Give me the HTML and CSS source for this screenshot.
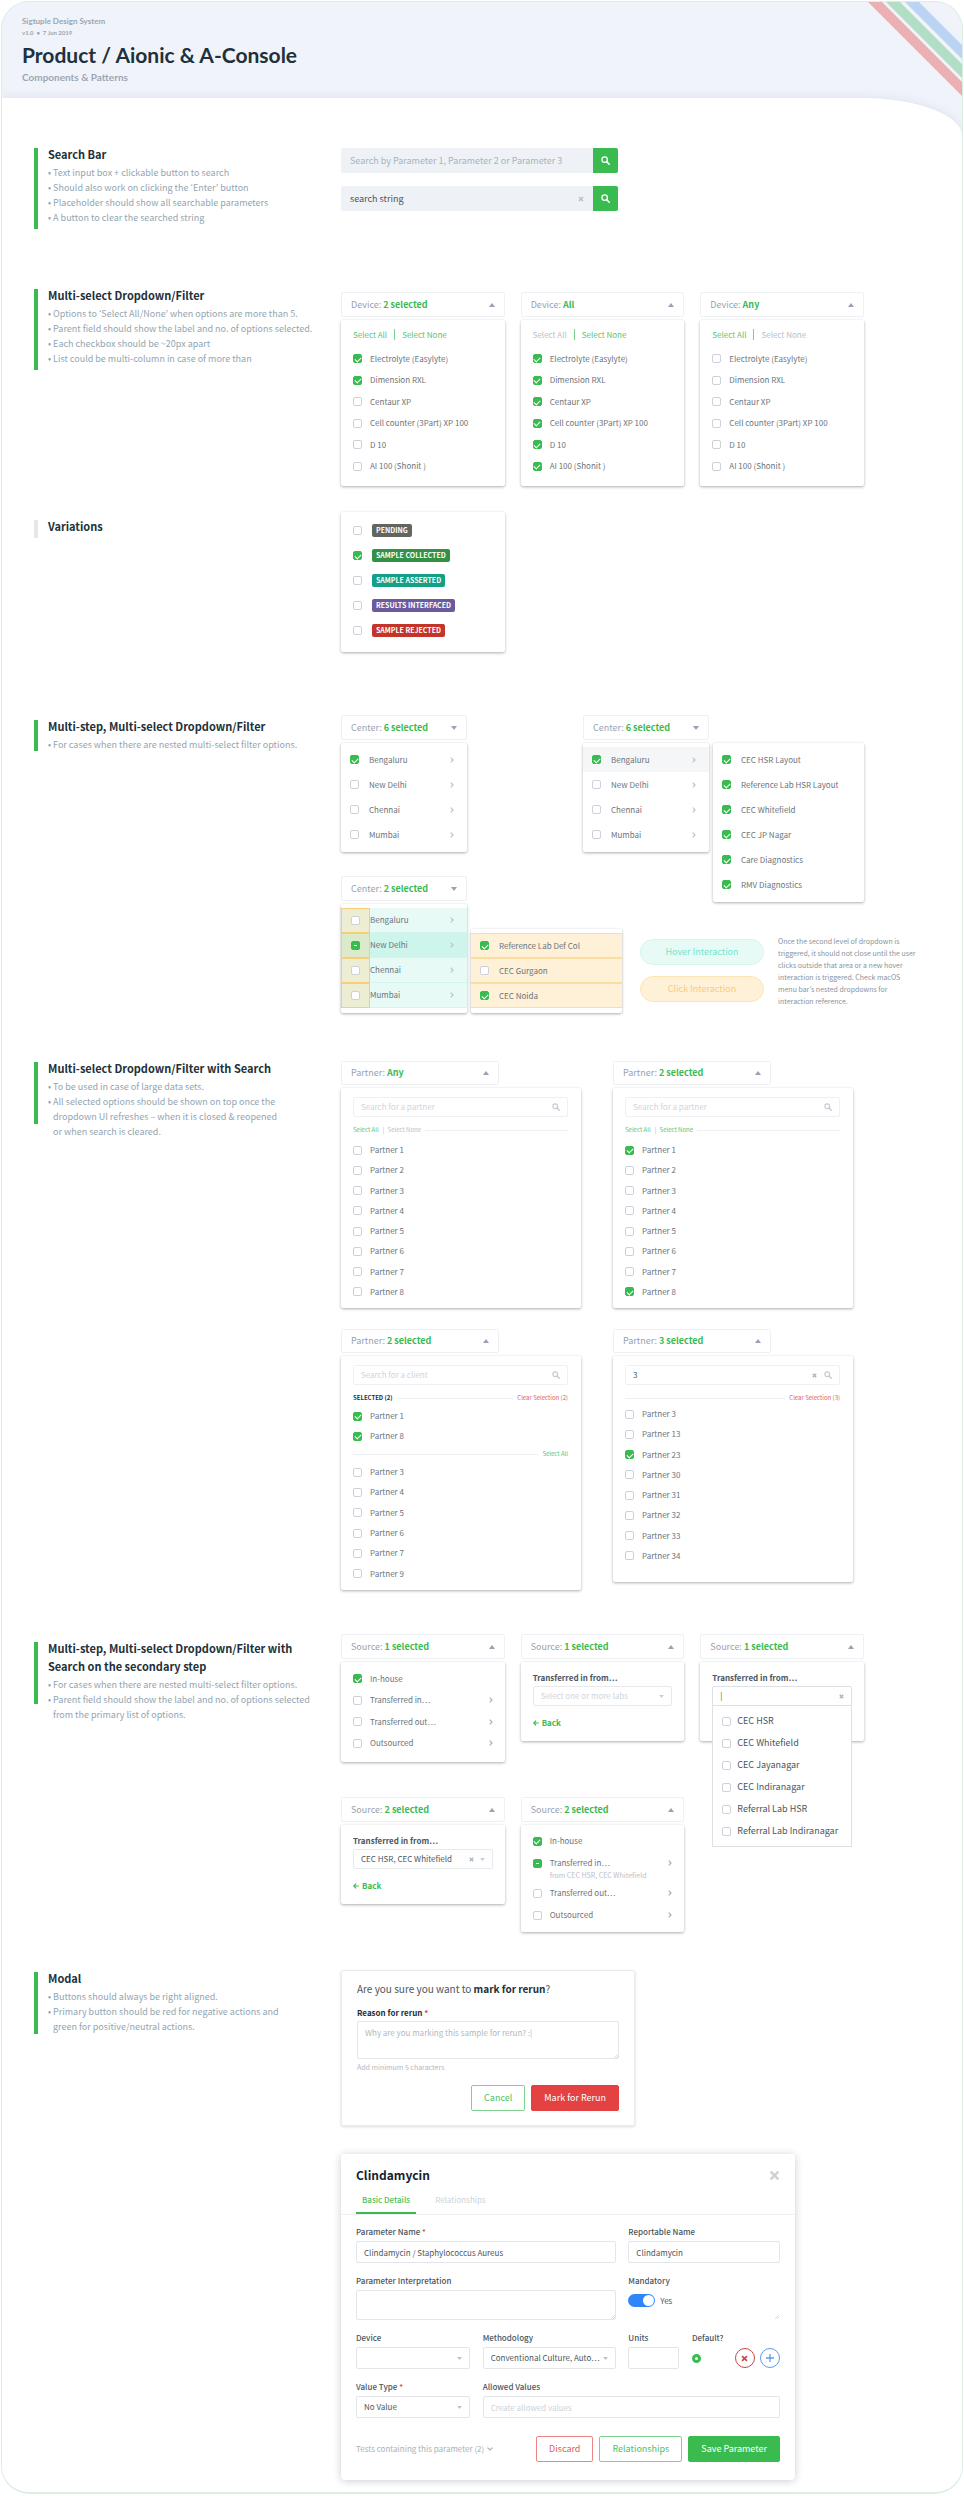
FILE: index.html
```
<!DOCTYPE html>
<html lang="en">
<head>
<meta charset="utf-8">
<title>Product / Aionic &amp; A-Console</title>
<meta name="viewport" content="width=device-width, initial-scale=1">
<link rel="stylesheet" href="styles.css">
</head>
<body>
<svg class="sprite" aria-hidden="true">
  <symbol id="i-search" viewBox="0 0 16 16"><circle cx="6.5" cy="6.5" r="4.8" fill="none" stroke="currentColor" stroke-width="2.2"/><path d="M10 10l4.6 4.6" stroke="currentColor" stroke-width="2.8" stroke-linecap="round"/></symbol>
  <symbol id="i-x" viewBox="0 0 10 10"><path d="M1.5 1.5l7 7M8.5 1.5l-7 7" stroke="currentColor" stroke-width="2.4" fill="none"/></symbol>
  <symbol id="i-up" viewBox="0 0 6 4"><path d="M0 4L3 0l3 4z" fill="currentColor"/></symbol>
  <symbol id="i-down" viewBox="0 0 6 4"><path d="M0 0h6L3 4z" fill="currentColor"/></symbol>
  <symbol id="i-right" viewBox="0 0 4 6"><path d="M.7.7L3 3 .7 5.3" stroke="currentColor" stroke-width="1.2" fill="none"/></symbol>
  <symbol id="i-back" viewBox="0 0 10 10"><path d="M9.5 5H1.5M5 1L1.2 5 5 9" stroke="currentColor" stroke-width="2" fill="none"/></symbol>
  <symbol id="i-grip" viewBox="0 0 6 6"><path d="M0 6L6 0M3 6l3-3" stroke="currentColor" stroke-width=".8"/></symbol>
</svg>
<div class="page">
  <header class="hero">
    <p class="hero-system">Sigtuple Design System</p>
    <p class="hero-version">v1.0 &nbsp;•&nbsp; 7 Jun 2019</p>
    <h1>Product / Aionic &amp; A-Console</h1>
    <p class="hero-sub">Components &amp; Patterns</p>
    <svg class="ribbons" viewBox="0 0 94 94" aria-hidden="true">
      <path d="M0 0h14l80 80v14z" fill="#ebb0b3"/><path d="M18 0h14l62 62v14z" fill="#b2dfc3"/><path d="M37 0h14l43 43v14z" fill="#bcd4f4"/>
    </svg>
  </header>
  <main class="sheet">

    <section class="spec">
      <div class="note"><span class="bar bar-xl"></span><div>
        <h2>Search Bar</h2>
        <ul><li>• Text input box + clickable button to search</li><li>• Should also work on clicking the ‘Enter’ button</li><li>• Placeholder should show all searchable parameters</li><li>• A button to clear the searched string</li></ul>
      </div></div>
      <div class="demo demo-search">
        <form class="searchbar"><input type="text" aria-label="Search parameters" placeholder="Search by Parameter 1, Parameter 2 or Parameter 3"><button type="button" class="go" aria-label="Search"><svg><use href="#i-search"/></svg></button></form>
        <form class="searchbar"><input type="text" aria-label="Search text" value="search string"><button type="button" class="clear" aria-label="Clear"><svg><use href="#i-x"/></svg></button><button type="button" class="go" aria-label="Search"><svg><use href="#i-search"/></svg></button></form>
      </div>
    </section>

    <section class="spec spec-multi">
      <div class="note"><span class="bar bar-xl"></span><div>
        <h2>Multi-select Dropdown/Filter</h2>
        <ul><li>• Options to ‘Select All/None’ when options are more than 5.</li><li>• Parent field should show the label and no. of options selected.</li><li>• Each checkbox should be ~20px apart</li><li>• List could be multi-column in case of more than</li></ul>
      </div></div>
      <div class="demo cols3">
        <div class="dropdown">
          <button class="trigger"><span>Device: <b>2 selected</b></span><svg><use href="#i-up"/></svg></button>
          <div class="menu menu-device">
            <div class="bulk"><button>Select All</button><i></i><button>Select None</button></div>
            <ul class="options">
              <li><label><input type="checkbox" checked>Electrolyte (Easylyte)</label></li>
              <li><label><input type="checkbox" checked>Dimension RXL</label></li>
              <li><label><input type="checkbox">Centaur XP</label></li>
              <li><label><input type="checkbox">Cell counter (3Part) XP 100</label></li>
              <li><label><input type="checkbox">D 10</label></li>
              <li><label><input type="checkbox">AI 100 (Shonit )</label></li>
            </ul>
          </div>
        </div>
        <div class="dropdown">
          <button class="trigger"><span>Device: <b>All</b></span><svg><use href="#i-up"/></svg></button>
          <div class="menu menu-device">
            <div class="bulk"><button disabled>Select All</button><i></i><button>Select None</button></div>
            <ul class="options">
              <li><label><input type="checkbox" checked>Electrolyte (Easylyte)</label></li>
              <li><label><input type="checkbox" checked>Dimension RXL</label></li>
              <li><label><input type="checkbox" checked>Centaur XP</label></li>
              <li><label><input type="checkbox" checked>Cell counter (3Part) XP 100</label></li>
              <li><label><input type="checkbox" checked>D 10</label></li>
              <li><label><input type="checkbox" checked>AI 100 (Shonit )</label></li>
            </ul>
          </div>
        </div>
        <div class="dropdown">
          <button class="trigger"><span>Device: <b>Any</b></span><svg><use href="#i-up"/></svg></button>
          <div class="menu menu-device">
            <div class="bulk"><button>Select All</button><i></i><button disabled>Select None</button></div>
            <ul class="options">
              <li><label><input type="checkbox">Electrolyte (Easylyte)</label></li>
              <li><label><input type="checkbox">Dimension RXL</label></li>
              <li><label><input type="checkbox">Centaur XP</label></li>
              <li><label><input type="checkbox">Cell counter (3Part) XP 100</label></li>
              <li><label><input type="checkbox">D 10</label></li>
              <li><label><input type="checkbox">AI 100 (Shonit )</label></li>
            </ul>
          </div>
        </div>
      </div>
    </section>

    <section class="spec spec-variations">
      <div class="note"><span class="bar bar-sm"></span><div><h2>Variations</h2></div></div>
      <div class="demo cols3">
        <div class="menu menu-status">
          <ul class="options">
            <li><label><input type="checkbox"><span class="tag tag-gray">PENDING</span></label></li>
            <li><label><input type="checkbox" checked><span class="tag tag-green">SAMPLE COLLECTED</span></label></li>
            <li><label><input type="checkbox"><span class="tag tag-teal">SAMPLE ASSERTED</span></label></li>
            <li><label><input type="checkbox"><span class="tag tag-purple">RESULTS INTERFACED</span></label></li>
            <li><label><input type="checkbox"><span class="tag tag-red">SAMPLE REJECTED</span></label></li>
          </ul>
        </div>
      </div>
    </section>

    <section class="spec spec-nested">
      <div class="note"><span class="bar bar-md"></span><div>
        <h2>Multi-step, Multi-select Dropdown/Filter</h2>
        <ul><li>• For cases when there are nested multi-select filter options.</li></ul>
      </div></div>
      <div class="demo nested">
        <div class="nested-top">
          <div class="dropdown center">
            <button class="trigger"><span>Center: <b>6 selected</b></span><svg><use href="#i-down"/></svg></button>
            <div class="menu menu-center"><ul class="options">
              <li><label><input type="checkbox" checked>Bengaluru</label><svg><use href="#i-right"/></svg></li>
              <li><label><input type="checkbox">New Delhi</label><svg><use href="#i-right"/></svg></li>
              <li><label><input type="checkbox">Chennai</label><svg><use href="#i-right"/></svg></li>
              <li><label><input type="checkbox">Mumbai</label><svg><use href="#i-right"/></svg></li>
            </ul></div>
          </div>
          <div class="flyout">
            <div class="dropdown center">
              <button class="trigger"><span>Center: <b>6 selected</b></span><svg><use href="#i-down"/></svg></button>
              <div class="menu menu-center"><ul class="options">
                <li class="hovered"><label><input type="checkbox" checked>Bengaluru</label><svg><use href="#i-right"/></svg></li>
                <li><label><input type="checkbox">New Delhi</label><svg><use href="#i-right"/></svg></li>
                <li><label><input type="checkbox">Chennai</label><svg><use href="#i-right"/></svg></li>
                <li><label><input type="checkbox">Mumbai</label><svg><use href="#i-right"/></svg></li>
              </ul></div>
            </div>
            <div class="menu menu-center submenu"><ul class="options">
              <li><label><input type="checkbox" checked>CEC HSR Layout</label></li>
              <li><label><input type="checkbox" checked>Reference Lab HSR Layout</label></li>
              <li><label><input type="checkbox" checked>CEC Whitefield</label></li>
              <li><label><input type="checkbox" checked>CEC JP Nagar</label></li>
              <li><label><input type="checkbox" checked>Care Diagnostics</label></li>
              <li><label><input type="checkbox" checked>RMV Diagnostics</label></li>
            </ul></div>
          </div>
        </div>
        <div class="nested-bottom">
          <div class="dropdown center">
            <button class="trigger"><span>Center: <b>2 selected</b></span><svg><use href="#i-down"/></svg></button>
            <div class="menu menu-center zones"><ul class="options">
              <li><label><span class="hit"><input type="checkbox"></span>Bengaluru</label><svg><use href="#i-right"/></svg></li>
              <li class="active"><label><span class="hit"><input type="checkbox" class="mixed"></span>New Delhi</label><svg><use href="#i-right"/></svg></li>
              <li><label><span class="hit"><input type="checkbox"></span>Chennai</label><svg><use href="#i-right"/></svg></li>
              <li><label><span class="hit"><input type="checkbox"></span>Mumbai</label><svg><use href="#i-right"/></svg></li>
            </ul></div>
          </div>
          <div class="menu menu-center submenu click"><ul class="options">
            <li><label><input type="checkbox" checked>Reference Lab Def Col</label></li>
            <li><label><input type="checkbox">CEC Gurgaon</label></li>
            <li><label><input type="checkbox" checked>CEC Noida</label></li>
          </ul></div>
          <div class="legend"><span class="pill pill-hover">Hover Interaction</span><span class="pill pill-click">Click Interaction</span></div>
          <p class="remark">Once the second level of dropdown is<br>triggered, it should not close until the user<br>clicks outside that area or a new hover<br>interaction is triggered. Check macOS<br>menu bar’s nested dropdowns for<br>interaction reference.</p>
        </div>
      </div>
    </section>

    <section class="spec spec-search">
      <div class="note"><span class="bar bar-lg"></span><div>
        <h2>Multi-select Dropdown/Filter with Search</h2>
        <ul><li>• To be used in case of large data sets.</li><li>• All selected options should be shown on top once the<br>dropdown UI refreshes – when it is closed &amp; reopened<br>or when search is cleared.</li></ul>
      </div></div>
      <div class="demo cols2">
        <div class="dropdown partner">
          <button class="trigger"><span>Partner: <b>Any</b></span><svg><use href="#i-up"/></svg></button>
          <div class="menu menu-partner">
            <div class="find"><input type="text" aria-label="Search for a partner" placeholder="Search for a partner"><svg><use href="#i-search"/></svg></div>
            <div class="rule"><button>Select All</button><i></i><button disabled>Select None</button><hr></div>
            <ul class="options">
              <li><label><input type="checkbox">Partner 1</label></li><li><label><input type="checkbox">Partner 2</label></li><li><label><input type="checkbox">Partner 3</label></li><li><label><input type="checkbox">Partner 4</label></li><li><label><input type="checkbox">Partner 5</label></li><li><label><input type="checkbox">Partner 6</label></li><li><label><input type="checkbox">Partner 7</label></li><li><label><input type="checkbox">Partner 8</label></li>
            </ul>
          </div>
        </div>
        <div class="dropdown partner">
          <button class="trigger"><span>Partner: <b>2 selected</b></span><svg><use href="#i-up"/></svg></button>
          <div class="menu menu-partner">
            <div class="find"><input type="text" aria-label="Search for a partner" placeholder="Search for a partner"><svg><use href="#i-search"/></svg></div>
            <div class="rule"><button>Select All</button><i></i><button>Select None</button><hr></div>
            <ul class="options">
              <li><label><input type="checkbox" checked>Partner 1</label></li><li><label><input type="checkbox">Partner 2</label></li><li><label><input type="checkbox">Partner 3</label></li><li><label><input type="checkbox">Partner 4</label></li><li><label><input type="checkbox">Partner 5</label></li><li><label><input type="checkbox">Partner 6</label></li><li><label><input type="checkbox">Partner 7</label></li><li><label><input type="checkbox" checked>Partner 8</label></li>
            </ul>
          </div>
        </div>
        <div class="dropdown partner">
          <button class="trigger"><span>Partner: <b>2 selected</b></span><svg><use href="#i-up"/></svg></button>
          <div class="menu menu-partner grouped">
            <div class="find"><input type="text" aria-label="Search for a client" placeholder="Search for a client"><svg><use href="#i-search"/></svg></div>
            <div class="rule"><strong>SELECTED (2)</strong><hr><button class="danger">Clear Selection (2)</button></div>
            <ul class="options picked">
              <li><label><input type="checkbox" checked>Partner 1</label></li><li><label><input type="checkbox" checked>Partner 8</label></li>
            </ul>
            <div class="rule rule-tight"><hr><button>Select All</button></div>
            <ul class="options rest">
              <li><label><input type="checkbox">Partner 3</label></li><li><label><input type="checkbox">Partner 4</label></li><li><label><input type="checkbox">Partner 5</label></li><li><label><input type="checkbox">Partner 6</label></li><li><label><input type="checkbox">Partner 7</label></li><li><label><input type="checkbox">Partner 9</label></li>
            </ul>
          </div>
        </div>
        <div class="dropdown partner">
          <button class="trigger"><span>Partner: <b>3 selected</b></span><svg><use href="#i-up"/></svg></button>
          <div class="menu menu-partner filtered">
            <div class="find"><input type="text" aria-label="Search for a partner" value="3"><button class="wipe" aria-label="Clear"><svg><use href="#i-x"/></svg></button><svg><use href="#i-search"/></svg></div>
            <div class="rule"><hr><button class="danger">Clear Selection (3)</button></div>
            <ul class="options">
              <li><label><input type="checkbox">Partner 3</label></li><li><label><input type="checkbox">Partner 13</label></li><li><label><input type="checkbox" checked>Partner 23</label></li><li><label><input type="checkbox">Partner 30</label></li><li><label><input type="checkbox">Partner 31</label></li><li><label><input type="checkbox">Partner 32</label></li><li><label><input type="checkbox">Partner 33</label></li><li><label><input type="checkbox">Partner 34</label></li>
            </ul>
          </div>
        </div>
      </div>
    </section>

    <section class="spec spec-secondary">
      <div class="note"><span class="bar bar-lg"></span><div>
        <h2>Multi-step, Multi-select Dropdown/Filter with<br>Search on the secondary step</h2>
        <ul><li>• For cases when there are nested multi-select filter options.</li><li>• Parent field should show the label and no. of options selected<br>from the primary list of options.</li></ul>
      </div></div>
      <div class="demo cols3 sources">
        <div class="dropdown">
          <button class="trigger"><span>Source: <b>1 selected</b></span><svg><use href="#i-up"/></svg></button>
          <div class="menu menu-source"><ul class="options">
            <li><label><input type="checkbox" checked>In-house</label></li>
            <li><label><input type="checkbox">Transferred in…</label><svg><use href="#i-right"/></svg></li>
            <li><label><input type="checkbox">Transferred out…</label><svg><use href="#i-right"/></svg></li>
            <li><label><input type="checkbox">Outsourced</label><svg><use href="#i-right"/></svg></li>
          </ul></div>
        </div>
        <div class="dropdown">
          <button class="trigger"><span>Source: <b>1 selected</b></span><svg><use href="#i-up"/></svg></button>
          <div class="menu menu-step">
            <label class="step-title" for="labs1">Transferred in from…</label>
            <div class="combo"><input id="labs1" type="text" placeholder="Select one or more labs"><svg><use href="#i-down"/></svg></div>
            <button class="back"><svg><use href="#i-back"/></svg>Back</button>
          </div>
        </div>
        <div class="dropdown">
          <button class="trigger"><span>Source: <b>1 selected</b></span><svg><use href="#i-up"/></svg></button>
          <div class="menu menu-step">
            <label class="step-title" for="labs2">Transferred in from…</label>
            <div class="combo open"><input id="labs2" type="text" value="|"><button class="wipe" aria-label="Clear"><svg><use href="#i-x"/></svg></button>
              <ul class="options popup">
                <li><label><input type="checkbox">CEC HSR</label></li>
                <li><label><input type="checkbox">CEC Whitefield</label></li>
                <li><label><input type="checkbox">CEC Jayanagar</label></li>
                <li><label><input type="checkbox">CEC Indiranagar</label></li>
                <li><label><input type="checkbox">Referral Lab HSR</label></li>
                <li><label><input type="checkbox">Referral Lab Indiranagar</label></li>
              </ul>
            </div>
          </div>
        </div>
        <div class="dropdown">
          <button class="trigger"><span>Source: <b>2 selected</b></span><svg><use href="#i-up"/></svg></button>
          <div class="menu menu-step">
            <label class="step-title" for="labs3">Transferred in from…</label>
            <div class="combo"><input id="labs3" type="text" value="CEC HSR, CEC Whitefield"><button class="wipe" aria-label="Clear"><svg><use href="#i-x"/></svg></button><svg><use href="#i-down"/></svg></div>
            <button class="back"><svg><use href="#i-back"/></svg>Back</button>
          </div>
        </div>
        <div class="dropdown">
          <button class="trigger"><span>Source: <b>2 selected</b></span><svg><use href="#i-up"/></svg></button>
          <div class="menu menu-source detailed"><ul class="options">
            <li><label><input type="checkbox" checked>In-house</label></li>
            <li class="with-detail"><label><input type="checkbox" class="mixed">Transferred in…</label><svg><use href="#i-right"/></svg><small>from CEC HSR, CEC Whitefield</small></li>
            <li><label><input type="checkbox">Transferred out…</label><svg><use href="#i-right"/></svg></li>
            <li><label><input type="checkbox">Outsourced</label><svg><use href="#i-right"/></svg></li>
          </ul></div>
        </div>
      </div>
    </section>

    <section class="spec spec-modal">
      <div class="note"><span class="bar bar-lg"></span><div>
        <h2>Modal</h2>
        <ul><li>• Buttons should always be right aligned.</li><li>• Primary button should be red for negative actions and<br>green for positive/neutral actions.</li></ul>
      </div></div>
      <div class="demo modals">
        <form class="dialog dialog-confirm">
          <p class="question">Are you sure you want to <b>mark for rerun</b>?</p>
          <label class="strong" for="reason">Reason for rerun <em>*</em></label>
          <div class="area"><textarea id="reason" placeholder="Why are you marking this sample for rerun? :|"></textarea><svg><use href="#i-grip"/></svg></div>
          <p class="help">Add minimum 5 characters</p>
          <div class="actions"><button type="button" class="btn btn-green">Cancel</button><button type="button" class="btn btn-red-solid">Mark for Rerun</button></div>
        </form>
        <form class="dialog dialog-param">
          <div class="dialog-head"><h3>Clindamycin</h3><button type="button" class="close" aria-label="Close"><svg><use href="#i-x"/></svg></button></div>
          <nav class="tabs"><button type="button" class="current">Basic Details</button><button type="button">Relationships</button></nav>
          <div class="fields">
            <div class="field f-name"><label for="pname">Parameter Name <em>*</em></label><input id="pname" type="text" value="Clindamycin / Staphylococcus Aureus"></div>
            <div class="field f-report"><label for="rname">Reportable Name</label><input id="rname" type="text" value="Clindamycin"></div>
            <div class="field f-name"><label for="interp">Parameter Interpretation</label><div class="area"><textarea id="interp"></textarea><svg><use href="#i-grip"/></svg></div></div>
            <div class="field f-report"><label for="mand">Mandatory</label><div class="switch"><input id="mand" type="checkbox" role="switch" checked><span>Yes</span></div><svg class="stray"><use href="#i-grip"/></svg></div>
            <div class="field f-device"><label for="device">Device</label><div class="select"><select id="device"><option></option></select><svg><use href="#i-down"/></svg></div></div>
            <div class="field f-method"><label for="method">Methodology</label><div class="select"><select id="method"><option>Conventional Culture, Auto…</option></select><svg><use href="#i-down"/></svg></div></div>
            <div class="field f-units"><label for="units">Units</label><input id="units" type="text"></div>
            <div class="field f-default"><label for="default">Default?</label><div class="row-tools"><input id="default" type="radio" checked><button type="button" class="round remove" aria-label="Remove"><svg><use href="#i-x"/></svg></button><button type="button" class="round add" aria-label="Add"><svg viewBox="0 0 10 10"><path d="M5 0v10M0 5h10" stroke="currentColor" stroke-width="1.6"/></svg></button></div></div>
            <div class="field f-device"><label for="vtype">Value Type <em>*</em></label><div class="select"><select id="vtype"><option>No Value</option></select><svg><use href="#i-down"/></svg></div></div>
            <div class="field f-allowed"><label for="allowed">Allowed Values</label><input id="allowed" type="text" placeholder="Create allowed values"></div>
          </div>
          <div class="actions"><button type="button" class="expander">Tests containing this parameter (2)<svg viewBox="0 0 6 4"><path d="M.5.6L3 3 5.5.6" stroke="currentColor" stroke-width="1.2" fill="none"/></svg></button><button type="button" class="btn btn-red">Discard</button><button type="button" class="btn btn-green">Relationships</button><button type="button" class="btn btn-green-solid">Save Parameter</button></div>
        </form>
      </div>
    </section>
  </main>
</div>
</body>
</html>
```
FILE: styles.css
```
:root {
  --sans: "Noto Sans CJK KR", "Noto Sans CJK SC", "Open Sans", sans-serif;
  --display: Lato, "Open Sans", sans-serif;
  --ink: #22303a;
  --text: #6b747b;
  --muted: #93a5b1;
  --label: #98a2b3;
  --green: #39bb50;
  --line: #eef0f3;
}
* { box-sizing: border-box; }
body { margin: 0; background: #fff; color: var(--text); font: 8px/12px var(--sans); }
h1, h2, h3, p, ul { margin: 0; padding: 0; }
ul { list-style: none; }
button, input, select, textarea { margin: 0; padding: 0; border: 0; background: none; color: inherit; font: inherit; outline: 0; border-radius: 0; }
svg { display: block; flex: none; }
.sprite { position: absolute; width: 0; height: 0; }

.page { margin: 1px; border: 1px solid #d9f0e0; border-width: 1px 1px 2px; border-radius: 28px; background: #f0f3fa; overflow: hidden; }

/* Header */
.hero { position: relative; height: 96px; padding: 13px 20px 0; font-family: var(--display); color: #9ba6b4; }
.hero-system { font-size: 8px; line-height: 12px; font-weight: 700; }
.hero-version { font-size: 6px; line-height: 12px; font-weight: 700; }
.hero h1 { margin-top: 4px; font-size: 21px; line-height: 24px; font-weight: 700; color: var(--ink); }
.hero-sub { margin-top: 3px; font-size: 10px; line-height: 14px; font-weight: 700; }
.ribbons { position: absolute; top: 0; right: 0; width: 94px; height: 94px; }

/* Two-column spec rows */
.sheet { padding: 47px 32px 12px; background: #fff; border-top-right-radius: 100px 38px; box-shadow: 0 -2px 8px rgba(120, 140, 170, .12); }
.spec { display: grid; grid-template-columns: 307px minmax(0, 523px); align-items: start; }
.demo-search { padding-top: 3px; }
.spec-multi { margin-top: 57px; }
.spec-multi .demo { padding-top: 6px; }
.spec-variations { margin-top: 26px; }
.spec-variations .note { padding-top: 5px; }
.spec-nested { margin-top: 63px; }
.spec-nested .note { padding-top: 2px; }
.spec-search { margin-top: 46px; }
.spec-search .demo { padding-top: 2px; }
.spec-secondary { margin-top: 44px; }
.spec-secondary .note { padding-top: 5px; }
.spec-modal { margin-top: 37px; }

.note { display: flex; gap: 10px; }
.bar { flex: none; width: 4px; margin-top: 3px; background: var(--green); }
.bar-xl { height: 81px; }
.bar-lg { height: 62px; }
.bar-md { height: 31px; }
.bar-sm { height: 18px; background: #e4e8ec; }
.note h2 { font-size: 11px; line-height: 18px; font-weight: 700; color: var(--ink); white-space: nowrap; }
.note ul { margin-top: 2px; font-size: 9px; line-height: 15px; color: var(--muted); white-space: nowrap; }
.note li { padding-left: 5px; text-indent: -5px; }

/* Search bar */
.demo-search { display: grid; gap: 13px; }
.searchbar { display: flex; width: 277px; height: 25px; border-radius: 2px; overflow: hidden; background: #eef1f6; font-size: 9px; }
.searchbar input { flex: 1; min-width: 0; padding-left: 9px; color: #4b565f; }
.searchbar input::placeholder { color: #a9b3be; opacity: 1; }
.clear { width: 24px; display: grid; place-items: center; color: #b9c0c8; }
.clear svg { width: 6px; height: 6px; }
.go { width: 25px; display: grid; place-items: center; background: var(--green); color: #fff; }
.go svg { width: 9px; height: 9px; }

/* Dropdowns */
.cols3 { display: grid; grid-template-columns: repeat(3, minmax(0, 1fr)); gap: 35px 16px; align-items: start; }
.dropdown { display: grid; gap: 3px; }
.trigger { display: flex; align-items: center; justify-content: space-between; height: 25px; padding: 0 9px; border: 1px solid var(--line); border-radius: 2px; font-size: 9px; color: var(--label); text-align: left; }
.trigger b { color: var(--green); font-weight: 700; }
.trigger svg { width: 6px; height: 4px; color: #98a2b3; }
.menu { border-radius: 2px; background: #fff; box-shadow: 0 1px 3px rgba(0, 0, 0, .32); }
.options { display: grid; grid-auto-rows: 1fr; }
.options li { display: flex; align-items: center; justify-content: space-between; }
.options label { display: flex; align-items: center; gap: 8px; }
.options li > svg { width: 4px; height: 6px; color: #a9b1ba; }

input[type="checkbox"] { appearance: none; display: grid; place-items: center; flex: none; width: 9px; height: 9px; border: 1px solid #cdd2da; border-radius: 2px; background: #fff; }
input[type="checkbox"]:checked, input[type="checkbox"].mixed { border-color: var(--green); background: var(--green); }
input[type="checkbox"]:checked::after { content: ""; width: 5px; height: 3px; border: solid #fff; border-width: 0 0 1px 1px; transform: rotate(-45deg); }
input[type="checkbox"].mixed::after { content: ""; width: 3px; height: 1px; background: #fff; }

.menu-device { padding: 8px 12px 9px; }
.menu-device .options { min-height: 129px; }
.bulk { display: flex; align-items: center; gap: 7px; height: 13px; margin-bottom: 7px; color: #5cc56f; }
.bulk i { width: 1px; height: 11px; background: #7fd28e; }
.bulk button:disabled, .rule button:disabled { color: #b9c0c8; }

.menu-status { padding: 6px 12px 9px; }
.menu-status .options { min-height: 125px; }
.menu-status label { gap: 10px; }
.tag { height: 13px; padding: 0 4px; border-radius: 2px; color: #fff; font-size: 7px; line-height: 13px; font-weight: 700; }
.tag-gray { background: #63655f; }
.tag-green { background: #349045; }
.tag-teal { background: #14a085; }
.tag-purple { background: #6c5b9c; }
.tag-red { background: #c3342b; }

/* Nested menus */
.nested { display: grid; gap: 25px; }
.nested-top { display: flex; justify-content: space-between; height: 136px; }
.center { width: 126px; align-content: start; }
.flyout { display: flex; gap: 4px; align-items: flex-start; }
.submenu { width: 151px; margin-top: 28px; }
.menu-center { padding: 4px 0 5px; }
.menu-center li { height: 25px; padding: 0 13px 0 9px; }
.menu-center li > svg { color: #bcc3cb; }
.menu-center label { gap: 10px; }
.hovered { background: #f5f6f8; }
.nested-bottom { display: flex; align-items: flex-start; }
.zones li { padding-left: 0; background: #e7faf6; border: 1px solid #d4f5ed; border-width: 0 0 1px; }
.zones .active { background: #cdf5ec; }
.zones label { gap: 0; }
.hit { display: grid; place-items: center; width: 29px; height: 25px; border: 1px solid #f7cd7a; background: rgba(250, 210, 125, .3); }
.nested-bottom .submenu { margin: 53px 0 0 4px; }
.click li { border: 1px solid #fbdda0; border-width: 1px 0; background: #fef1d8; }
.legend { display: grid; gap: 11px; margin: 63px 0 0 18px; }
.pill { display: grid; place-items: center; width: 124px; height: 26px; border: 1px solid #d3f5ee; border-radius: 13px; background: #e7faf6; color: #74e3cb; font-size: 9px; }
.pill-click { border-color: #fde4b5; background: #fef1d8; color: #fccc75; }
.remark { margin: 59px -60px 0 14px; font-size: 7px; line-height: 12px; color: #8a939b; white-space: nowrap; }

/* Searchable menus */
.cols2 { display: grid; grid-template-columns: repeat(2, 240px); gap: 21px 32px; align-items: start; }
.partner .trigger { width: 158px; height: 24px; }
.menu-partner { padding: 9px 13px 6px 12px; }
.find { display: flex; align-items: center; gap: 7px; height: 20px; padding: 0 7px; border: 1px solid var(--line); border-radius: 2px; color: #c6cbd3; }
.find input { flex: 1; min-width: 0; color: #4b565f; }
.find input::placeholder, .combo input::placeholder { color: #d0d4da; opacity: 1; }
.find svg { width: 8px; height: 8px; }
.find .wipe svg, .wipe svg { width: 5px; height: 5px; color: #a9b1ba; }
.rule { display: flex; align-items: center; gap: 4px; height: 12px; margin: 7px 0 4px; font-size: 6px; color: #5cc56f; }
.rule i { width: 1px; height: 7px; background: #dfe3e7; }
.rule hr { flex: 1; height: 1px; margin: 0; border: 0; background: var(--line); }
.rule strong { color: var(--ink); }
.rule .danger { color: #d9605f; }
.menu-partner .options { min-height: 162px; }
.menu-partner .picked { min-height: 40px; }
.menu-partner .rest { min-height: 122px; }
.grouped .rule { margin-bottom: 2px; }
.grouped .rule-tight { margin-top: 2px; }
.filtered { padding-bottom: 16px; }
.filtered .rule { margin-bottom: 0; }

/* Two-step source menus */
.menu-source { padding: 6px 12px 8px; }
.menu-source .options { min-height: 86px; }
.detailed { padding: 5px 12px 6px; }
.detailed .options { grid-auto-rows: auto; }
.detailed li { height: 22px; }
.detailed .with-detail { flex-wrap: wrap; align-content: flex-start; height: 30px; padding-top: 5px; }
.with-detail small { flex: 0 0 100%; padding-left: 17px; font-size: 7px; color: #b9c0c8; }
.menu-step { display: grid; height: 79px; padding: 10px 12px; align-content: start; }
.step-title { line-height: 12px; font-weight: 700; color: #4b565f; }
.combo { position: relative; display: flex; align-items: center; gap: 6px; height: 20px; margin-top: 2px; padding: 0 7px; border: 1px solid #e6e9ed; border-radius: 2px; }
.combo > input { flex: 1; min-width: 0; color: #4b565f; }
.combo > svg { width: 5px; height: 3px; color: #c6cbd3; }
.combo.open { border-color: #dde1e6; }
.popup { position: absolute; top: 18px; left: -1px; right: -1px; padding: 4px 9px; border: 1px solid #dde1e6; background: #fff; font-size: 9px; color: #4b565f; }
.popup li { height: 22px; white-space: nowrap; }
.popup label { gap: 6px; }
.back { display: flex; align-items: center; gap: 3px; height: 12px; margin-top: 11px; color: var(--green); font-weight: 700; }
.back svg { width: 6px; height: 6px; }

/* Dialogs */
.modals { display: grid; gap: 28px; padding-top: 1px; }
.dialog { background: #fff; border-radius: 2px; }
.dialog em { color: #d9403f; font-style: normal; }
.dialog label { color: #4b565f; font-weight: 500; }
.dialog .strong { color: var(--ink); font-weight: 700; }
.dialog-confirm { display: grid; width: 294px; padding: 10px 15px 14px; border: 1px solid #e9ebee; box-shadow: 0 1px 3px rgba(0, 0, 0, .15); }
.question { margin-bottom: 10px; font-size: 10px; line-height: 16px; color: #4b565f; }
.question b { color: var(--ink); }
.area { display: grid; }
.area > * { grid-area: 1 / 1; }
.area textarea { resize: none; height: 30px; padding: 3px 7px; border: 1px solid #e2e6ea; border-radius: 2px; }
.area svg, .stray { width: 4px; height: 4px; margin: 1px; place-self: end; color: #b9c0c8; }
.dialog-confirm .area { margin-top: 2px; }
.dialog-confirm .area textarea { height: 38px; padding: 5px 7px; }
.area textarea::placeholder { color: #b0b8c1; opacity: 1; }
.help { margin-top: 2px; font-size: 7px; color: #b0b8c1; }
.actions { display: flex; justify-content: flex-end; gap: 6px; margin-top: 12px; }
.btn { height: 26px; padding: 0 12px; border: 1px solid; border-radius: 2px; font-size: 9px; }
.btn-green { border-color: #7fd28e; color: #4fc163; }
.btn-red { border-color: #ee8483; color: #e45a59; }
.btn-red-solid { border-color: #e34142; background: #e34142; color: #fff; }
.btn-green-solid { border-color: var(--green); background: var(--green); color: #fff; }
.dialog-param { width: 454px; padding: 12px 15px 18px; border-radius: 4px; box-shadow: 0 1px 8px rgba(0, 0, 0, .2); }
.dialog-head { display: flex; align-items: center; justify-content: space-between; height: 18px; }
.dialog-head h3 { font-size: 12px; font-weight: 700; color: #161e2c; }
.close svg { width: 11px; height: 11px; color: #cdd1d8; }
.tabs { display: flex; gap: 13px; margin: 7px -15px 0; padding: 0 15px; border-bottom: 1px solid var(--line); }
.tabs button { height: 23px; padding: 0 6px 3px; border-bottom: 2px solid transparent; color: #cdd2d8; }
.tabs .current { border-color: var(--green); color: #4cbf60; font-weight: 500; }
.fields { display: grid; grid-template-columns: 114px 133px 51px 88px; justify-content: space-between; row-gap: 12px; margin-top: 11px; }
.field { display: grid; gap: 3px; align-content: start; color: #4b565f; }
.f-name { grid-column: span 2; }
.f-report { grid-column: span 2; }
.f-allowed { grid-column: span 3; }
.field > input, .select { height: 22px; border: 1px solid #e2e6ea; border-radius: 2px; }
.field > input { width: 100%; padding: 0 7px; }
.field > input::placeholder { color: #cdd2d8; opacity: 1; }
.select { display: grid; align-items: center; }
.select > * { grid-area: 1 / 1; }
.select select { appearance: none; height: 20px; padding: 0 7px; }
.select svg { width: 5px; height: 3px; margin-right: 7px; justify-self: end; color: #b9c0c8; }
.switch { display: flex; align-items: center; gap: 5px; height: 21px; }
.switch input[type="checkbox"] { width: 27px; height: 13px; border: 0; border-radius: 7px; background: #2f86fb; justify-items: end; padding-right: 1px; }
.switch input[type="checkbox"]:checked::after { width: 11px; height: 11px; border: 0; border-radius: 50%; background: #fff; transform: none; }
.row-tools { display: flex; align-items: center; gap: 5px; height: 22px; }
.row-tools input { appearance: none; width: 9px; height: 9px; margin-right: auto; border: 3px solid var(--green); border-radius: 50%; background: #fff; }
.round { display: grid; place-items: center; width: 20px; height: 20px; border: 1px solid; border-radius: 50%; }
.round.remove { color: #c84846; }
.round.add { color: #5c9bec; }
.round.remove svg { width: 7px; height: 7px; }
.round.add svg { width: 8px; height: 8px; }
.dialog-param .actions { margin-top: 18px; }
.expander { display: flex; align-items: center; gap: 3px; margin-right: auto; color: #a9b1ba; }
.expander svg { width: 6px; height: 4px; }
```
